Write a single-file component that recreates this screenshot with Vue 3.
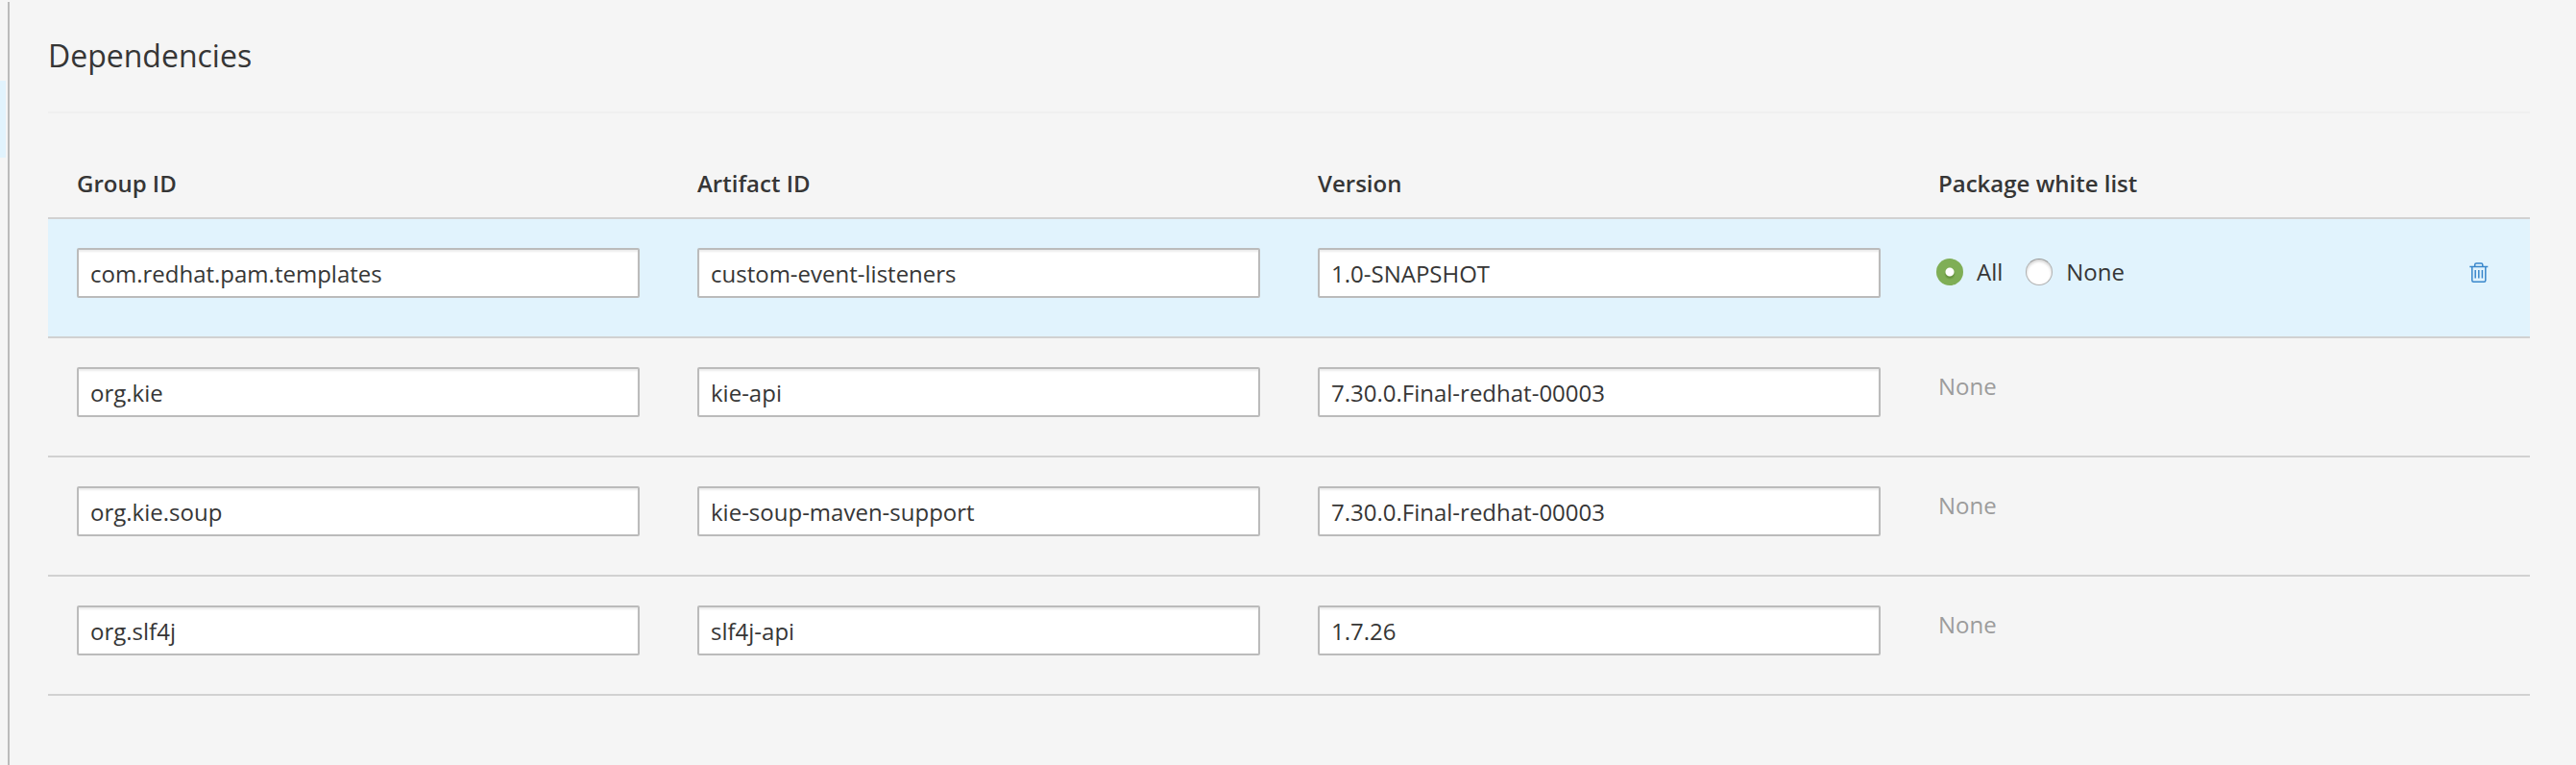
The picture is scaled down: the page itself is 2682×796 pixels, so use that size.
<script setup>
import { reactive, ref } from 'vue'

const columns = [
  { key: 'groupId', label: 'Group ID' },
  { key: 'artifactId', label: 'Artifact ID' },
  { key: 'version', label: 'Version' },
]

const rows = reactive([
  { groupId: 'com.redhat.pam.templates', artifactId: 'custom-event-listeners', version: '1.0-SNAPSHOT', editable: true },
  { groupId: 'org.kie', artifactId: 'kie-api', version: '7.30.0.Final-redhat-00003' },
  { groupId: 'org.kie.soup', artifactId: 'kie-soup-maven-support', version: '7.30.0.Final-redhat-00003' },
  { groupId: 'org.slf4j', artifactId: 'slf4j-api', version: '1.7.26' },
])

const whiteList = ref('all')

function removeRow(index) {
  rows.splice(index, 1)
}
</script>

<template>
  <div class="page">
    <div class="nav-edge">
      <div class="nav-active"></div>
    </div>
    <main class="content">
      <h1 class="title">Dependencies</h1>
      <table class="deps">
        <colgroup>
          <col class="col-field" />
          <col class="col-field" />
          <col class="col-field" />
          <col />
          <col class="col-actions" />
        </colgroup>
        <thead>
          <tr>
            <th v-for="c in columns" :key="c.key" scope="col">{{ c.label }}</th>
            <th scope="col">Package white list</th>
            <td></td>
          </tr>
        </thead>
        <tbody>
          <tr v-for="(row, i) in rows" :key="i" :class="{ selected: row.editable }">
            <td v-for="c in columns" :key="c.key">
              <input v-model="row[c.key]" class="field" type="text" :aria-label="c.label" />
            </td>
            <td>
              <div v-if="row.editable" class="choices">
                <label class="choice">
                  <input v-model="whiteList" class="radio" type="radio" name="whitelist" value="all" />
                  All
                </label>
                <label class="choice">
                  <input v-model="whiteList" class="radio" type="radio" name="whitelist" value="none" />
                  None
                </label>
              </div>
              <span v-else class="muted">None</span>
            </td>
            <td class="actions">
              <button v-if="row.editable" class="trash" type="button" aria-label="Delete" @click="removeRow(i)">
                <svg width="20" height="22" viewBox="0 0 20 22" fill="none" stroke="currentColor" stroke-width="1.5">
                  <path d="M0.3 4.5H19.3" />
                  <path d="M5.7 4.2V2.6Q5.7 1 7.3 1H12.2Q13.8 1 13.8 2.6V4.2" />
                  <path d="M2.8 4.8V18.8Q2.8 20.3 4.3 20.3H15.3Q16.8 20.3 16.8 18.8V4.8" />
                  <path d="M6.2 8V16.6M9.8 8V16.6M13.4 8V16.6" />
                </svg>
              </button>
            </td>
          </tr>
        </tbody>
      </table>
    </main>
  </div>
</template>

<style>
body {
  margin: 0;
  background: #f5f5f5;
}
</style>

<style scoped>
.page {
  box-sizing: border-box;
  display: flex;
  min-height: 100vh;
  padding-top: 2px;
  background: #f5f5f5;
  color: #363636;
  font-family: "Open Sans", "Noto Sans", sans-serif;
  font-size: 24px;
  line-height: 40px;
}
.nav-edge {
  flex: none;
  width: 8px;
  padding-top: 82px;
}
.nav-active {
  width: 6px;
  height: 80px;
  background: #e1f3fd;
}
.content {
  flex: 1;
  min-width: 0;
  padding: 34px 48px 40px 40px;
  border-left: 2px solid #bbb;
}
.title {
  margin: 0 0 52px;
  padding-bottom: 36px;
  border-bottom: 2px solid #f0f0f0;
  font-size: 32px;
  font-weight: 400;
  line-height: 44px;
}
.deps {
  width: 100%;
  table-layout: fixed;
  border-collapse: separate;
  border-spacing: 0;
}
.col-field {
  width: 25%;
}
.col-actions {
  width: 120px;
}
th,
td {
  border-bottom: 2px solid #d1d1d1;
  text-align: left;
  vertical-align: top;
}
th {
  padding: 1px 30px 15px;
  font-weight: 600;
}
tbody td {
  padding: 30px 30px 40px;
}
.selected td {
  background: #e1f3fd;
}
.field {
  box-sizing: border-box;
  display: block;
  width: 100%;
  height: 52px;
  margin: 0;
  padding: 0 12px;
  border: 2px solid #bbb;
  border-radius: 2px;
  background: #fff;
  box-shadow: inset 0 2px 2px rgba(3, 3, 3, 0.075);
  color: inherit;
  font: inherit;
}
.choices {
  display: flex;
  gap: 24px;
  margin-left: -2px;
  padding-top: 5px;
}
.choice {
  display: flex;
  align-items: center;
  gap: 14px;
}
.radio {
  appearance: none;
  box-sizing: border-box;
  flex: none;
  width: 28px;
  height: 28px;
  margin: 0;
  border: 1px solid #b0b0b0;
  border-top-color: #999;
  border-radius: 50%;
  background: #fff;
  box-shadow: inset 0 2px 3px rgba(0, 0, 0, 0.18);
}
.radio:checked {
  border: 0;
  background: radial-gradient(circle at 14px 14px, #fff 3px, #fff 4px, transparent 5px),
    radial-gradient(circle at 14px 16px, #5f8c38 3px, #7fae56 6px);
  box-shadow: none;
}
.muted {
  color: #9c9c9c;
}
tbody .actions {
  padding-right: 43px;
}
.trash {
  display: flex;
  align-items: center;
  justify-content: flex-end;
  width: 100%;
  height: 52px;
  margin: 0;
  padding: 0;
  border: 0;
  background: none;
  color: #3a87cb;
}
@media (max-width: 1000px) {
  .deps {
    min-width: 900px;
  }
  .content {
    overflow-x: auto;
  }
}
</style>
